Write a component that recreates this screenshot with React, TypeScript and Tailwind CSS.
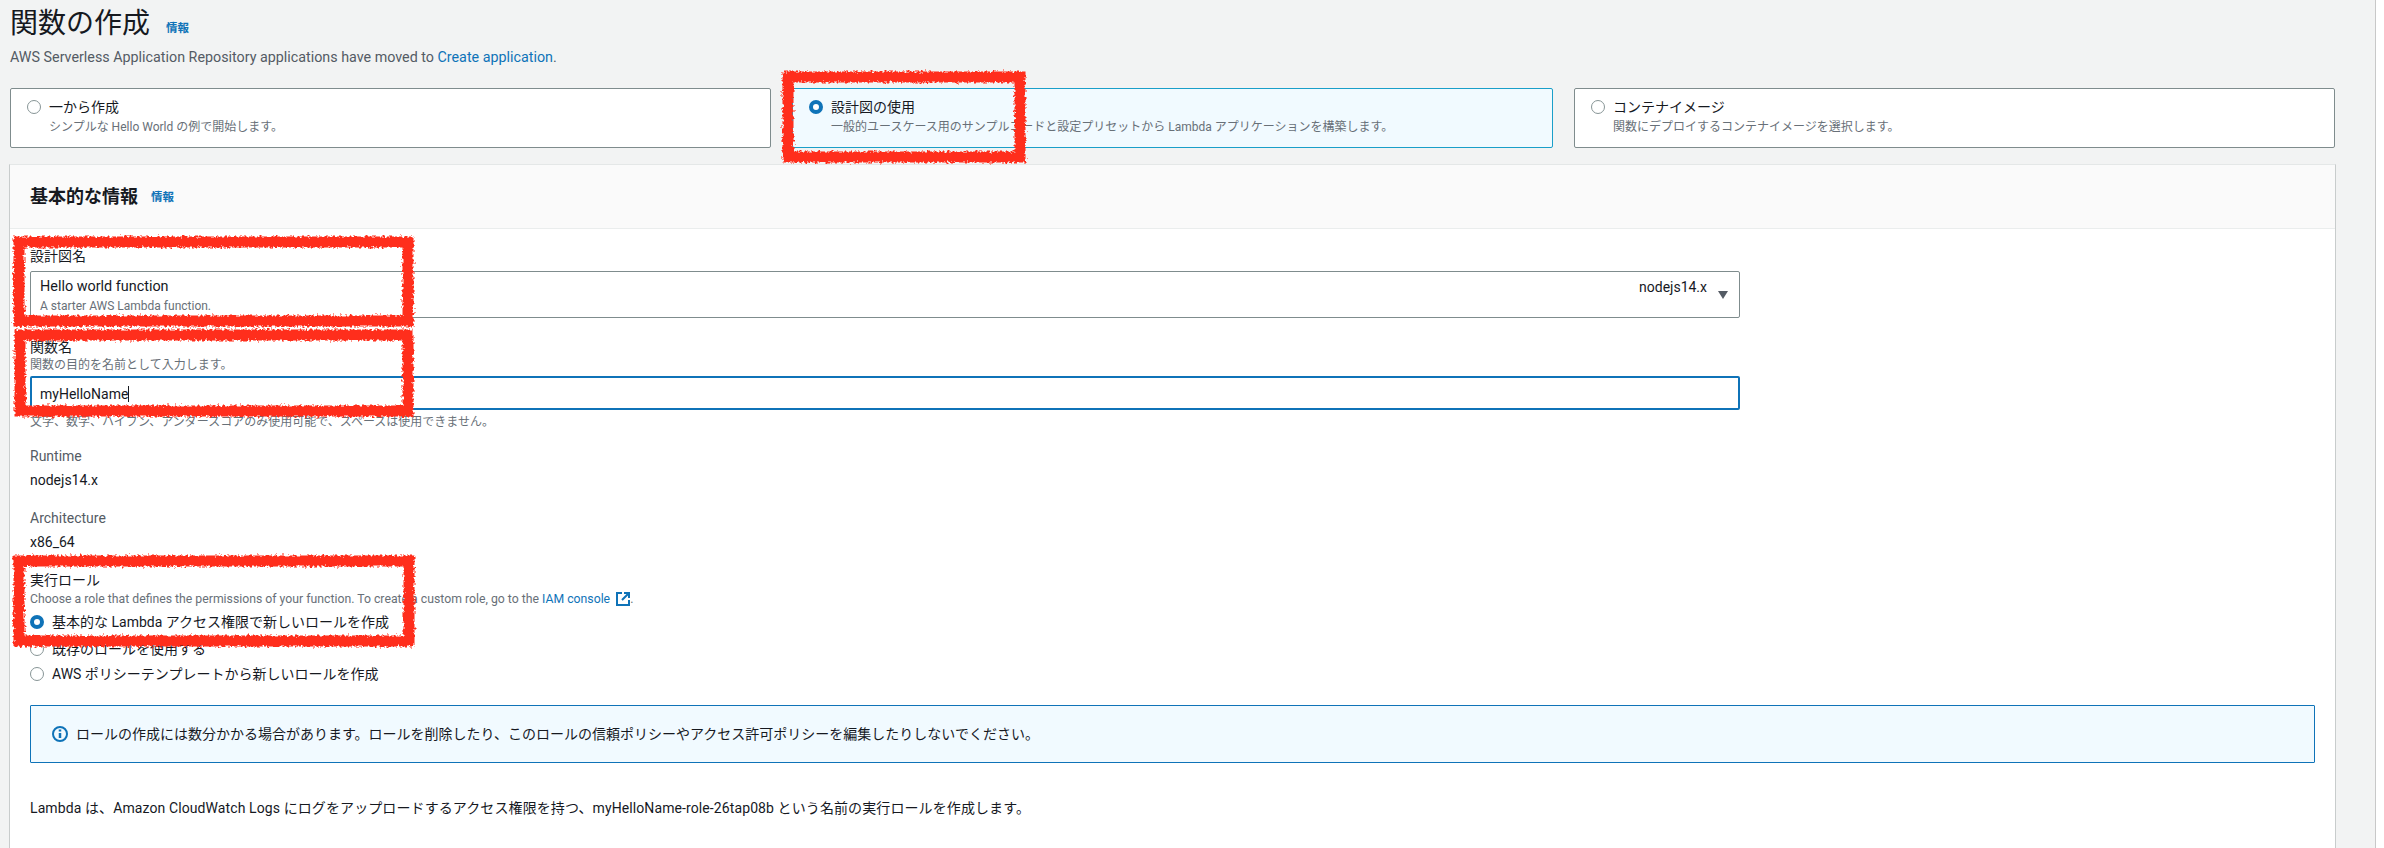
import React from 'react';

function Radio({ on }: { on?: boolean }) {
  return on ? (
    <span className="block w-[14px] h-[14px] rounded-full border-[4px] border-[#0f73b8] bg-white shrink-0" />
  ) : (
    <span className="block w-[14px] h-[14px] rounded-full border border-[#879596] bg-white shrink-0" />
  );
}

function ModeCard({ title, desc, on }: { title: string; desc: string; on?: boolean }) {
  const tone = on ? 'border-[#1a9fc9] bg-[#f1faff]' : 'border-[#7f8c8d] bg-white';
  return (
    <div className={`h-[60px] border rounded-[2px] pl-[16px] pt-[9px] ${tone}`}>
      <div className="flex items-center gap-[8px] h-[18px] text-[14px] text-[#16191f]">
        <Radio on={on} />
        <span>{title}</span>
      </div>
      <p className="pl-[22px] mt-[2px] text-[12px] leading-[18px] text-[#687078]">{desc}</p>
    </div>
  );
}

function RoleOption({ label, on, className }: { label: string; on?: boolean; className: string }) {
  return (
    <div className={`flex items-center gap-[8px] h-[18px] text-[14px] text-[#16191f] ${className}`}>
      <Radio on={on} />
      <span>{label}</span>
    </div>
  );
}

function InfoLink({ className }: { className: string }) {
  return <a className={`text-[11.5px] font-semibold text-[#0f73b8] ${className}`}>情報</a>;
}

export default function App() {
  return (
    <div className="relative flex h-[848px] overflow-hidden bg-[#f2f3f3] font-['Roboto','Noto_Sans_CJK_JP',sans-serif]">
      <main className="w-[2376px] shrink-0 pl-[10px] pr-[40px] border-r border-[#c8c8c8]">
        <div className="flex items-center h-[36px] mt-[6px]">
          <h1 className="text-[28px] leading-[36px] text-[#16191f]">関数の作成</h1>
          <InfoLink className="ml-[16px] mt-[10px]" />
        </div>
        <p className="mt-[6px] text-[14.3px] leading-[18px] text-[#545b64]">
          AWS Serverless Application Repository applications have moved to <a className="text-[#0f73b8]">Create application</a>.
        </p>

        <div className="grid grid-cols-3 gap-[21px] mt-[22px]">
          <ModeCard title="一から作成" desc="シンプルな Hello World の例で開始します。" />
          <ModeCard on title="設計図の使用" desc="一般的ユースケース用のサンプルコードと設定プリセットから Lambda アプリケーションを構築します。" />
          <ModeCard title="コンテナイメージ" desc="関数にデプロイするコンテナイメージを選択します。" />
        </div>

        <section className="-mx-px mt-[16px] h-[700px] bg-white border border-x-[#c8cccc] border-t-[#e4e7e7] border-b-[#c8cccc]">
          <header className="flex items-center h-[64px] pl-[20px] bg-[#fafafa] border-b border-[#eaeded]">
            <h2 className="text-[18px] font-bold text-[#16191f]">基本的な情報</h2>
            <InfoLink className="ml-[13px] mt-[3px]" />
          </header>

          <div className="px-[20px] pt-[18px] text-[14px] leading-[18px] text-[#16191f]">
            <label className="block">設計図名</label>
            <div className="flex justify-between w-[1710px] h-[47px] mt-[6px] pl-[9px] pr-[11px] pt-[6px] border border-[#7f8c8d] rounded-[2px]">
              <div>
                <div className="text-[14.4px]">Hello world function</div>
                <div className="mt-[1px] text-[12px] text-[#687078]">A starter AWS Lambda function.</div>
              </div>
              <div className="flex items-start gap-[11px]">
                <span>nodejs14.x</span>
                <svg width="10" height="8" viewBox="0 0 10 8" className="mt-[13px]">
                  <path d="M0 0h10L5 8z" fill="#545b64" />
                </svg>
              </div>
            </div>

            <label className="block mt-[20px]">関数名</label>
            <p className="text-[12px] text-[#687078]">関数の目的を名前として入力します。</p>
            <div className="flex items-center w-[1710px] h-[34px] mt-[2px] pl-[8px] pt-[1px] border-2 border-[#0f73b8] rounded-[2px]">
              <span>myHelloName</span>
              <span className="w-px h-[16px] bg-[#16191f]" />
            </div>
            <p className="mt-[3px] text-[12px] text-[#687078]">文字、数字、ハイフン、アンダースコアのみ使用可能で、スペースは使用できません。</p>

            <label className="block mt-[16px] text-[#545b64]">Runtime</label>
            <div className="mt-[6px]">nodejs14.x</div>
            <label className="block mt-[20px] text-[#545b64]">Architecture</label>
            <div className="mt-[6px]">x86_64</div>

            <label className="block mt-[20px]">実行ロール</label>
            <p className="flex items-center mt-[1px] text-[12.25px] text-[#687078]">
              Choose a role that defines the permissions of your function. To create a custom role, go to the&nbsp;
              <a className="text-[#0f73b8]">IAM console</a>
              <svg width="14" height="14" viewBox="0 0 14 14" fill="none" stroke="#0f73b8" strokeWidth="2" className="ml-[6px]">
                <path d="M6 1H1v12h12V8" />
                <path d="M8 1h5v5M13 1L6 8" />
              </svg>
              .
            </p>
            <RoleOption on label="基本的な Lambda アクセス権限で新しいロールを作成" className="mt-[5px]" />
            <RoleOption label="既存のロールを使用する" className="mt-[9px]" />
            <RoleOption label="AWS ポリシーテンプレートから新しいロールを作成" className="mt-[7px]" />

            <div className="flex items-center gap-[8px] h-[58px] mt-[22px] pl-[21px] bg-[#f1faff] border border-[#0f73b8] rounded-[1px]">
              <svg width="16" height="16" viewBox="0 0 16 16" fill="none" stroke="#0f73b8" strokeWidth="2">
                <circle cx="8" cy="8" r="7" />
                <path d="M8 7v5M8 3.5v2" strokeWidth="2.5" />
              </svg>
              <span>ロールの作成には数分かかる場合があります。ロールを削除したり、このロールの信頼ポリシーやアクセス許可ポリシーを編集したりしないでください。</span>
            </div>

            <p className="mt-[36px] tracking-[0.1px]">Lambda は、Amazon CloudWatch Logs にログをアップロードするアクセス権限を持つ、myHelloName-role-26tap08b という名前の実行ロールを作成します。</p>
          </div>
        </section>
      </main>
      <div className="flex-1 bg-white" />

      {/* red marker annotations drawn over the screenshot */}
      <svg className="absolute inset-0 w-full h-full pointer-events-none" fill="none" stroke="#ff2d1c" strokeWidth="11">
        <defs>
          <filter id="marker" x="-5%" y="-5%" width="110%" height="110%">
            <feTurbulence type="fractalNoise" baseFrequency="0.4" numOctaves="2" seed="4" />
            <feDisplacementMap in="SourceGraphic" scale="6" />
          </filter>
        </defs>
        <g filter="url(#marker)">
          <rect x="788" y="77" width="232" height="80" />
          <rect x="19" y="242" width="389" height="79" />
          <rect x="20" y="335" width="388" height="76" />
          <rect x="19" y="561" width="390" height="80" />
        </g>
      </svg>
    </div>
  );
}
